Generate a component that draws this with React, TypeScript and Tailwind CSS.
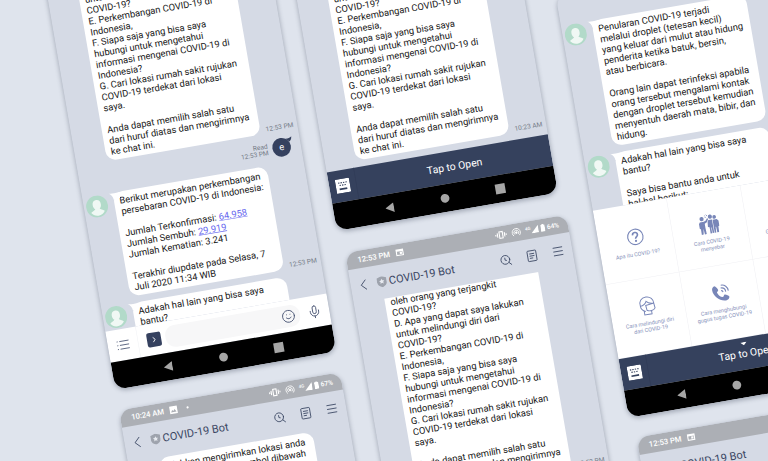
import type { ReactNode } from "react";
import { Menu, Mic, Search, Smile } from "lucide-react";

function Avatar() {
  return (
    <svg viewBox="0 0 40 40" className="ml-1 size-10 shrink-0" role="img" aria-label="Bot">
      <circle cx="20" cy="20" r="20" fill="#b2dac9" />
      <path d="M20 8c5 0 7.500 3.500 7.500 8.500 0 4-1.500 6.500-3.500 8 .5 2 6 3 8.500 5.500C30 34 25.500 37 20 37S10 34 7.500 30c2.500-2.500 8-3.500 8.500-5.500-2-1.500-3.500-4-3.500-8C12.500 11.500 15 8 20 8z" fill="#f0f8f4" />
    </svg>
  );
}

type BubbleProps = { children: ReactNode; time?: string; avatar?: boolean; shape?: string };

function Bubble({ children, time, avatar, shape = "rounded-[18px]" }: BubbleProps) {
  return (
    <div className="flex shrink-0 items-start">
      <div className="w-[56px] shrink-0">{avatar && <Avatar />}</div>
      <div className="relative w-[284px] shrink-0">
        {avatar && (
          <svg viewBox="0 0 20 14" className="absolute -left-2 top-0 h-[14px] w-5" aria-hidden="true">
            <path d="M0 0c4 2 9 2 20 1v11L8 13C8 8 5 3 0 0z" fill="#fff" />
          </svg>
        )}
        <div className={"overflow-hidden bg-white px-[10px] py-[6px] text-[17px] leading-5 text-[#161616] " + shape}>
          {children}
        </div>
      </div>
      {time && <span className="ml-[10px] self-end whitespace-nowrap text-xs text-[#747a86]">{time}</span>}
    </div>
  );
}

function Lines({ items }: { items: ReactNode[] }) {
  return (
    <>
      {items.map((item, i) => (
        <p key={i} className="min-h-5 whitespace-nowrap">{item}</p>
      ))}
    </>
  );
}

const menuLines = [
  "oleh orang yang terjangkit",
  "COVID-19?",
  "D. Apa yang dapat saya lakukan",
  "untuk melindungi diri dari",
  "COVID-19?",
  "E. Perkembangan COVID-19 di",
  "Indonesia,",
  "F. Siapa saja yang bisa saya",
  "hubungi untuk mengetahui",
  "informasi mengenai COVID-19 di",
  "Indonesia?",
  "G. Cari lokasi rumah sakit rujukan",
  "COVID-19 terdekat dari lokasi",
  "saya.",
  "",
  "Anda dapat memilih salah satu",
  "dari huruf diatas dan mengirimnya",
  "ke chat ini.",
];

function NavBar() {
  return (
    <div className="grid h-[50px] shrink-0 grid-cols-3 place-items-center bg-black px-[12.5%]">
      <button type="button" aria-label="Back">
        <svg viewBox="0 0 16 18" className="h-[18px] w-4 fill-[#a6a6a6]"><path d="M0 9 16 0v18z" /></svg>
      </button>
      <button type="button" aria-label="Home" className="size-4 rounded-full bg-[#a6a6a6]" />
      <button type="button" aria-label="Recent apps" className="size-[18px] bg-[#a6a6a6]" />
    </div>
  );
}

function StatusBar({ time, battery, photo }: { time: string; battery: string; photo?: boolean }) {
  return (
    <div className="flex h-8 shrink-0 items-center bg-[#acafb5] pl-5 pr-4 text-sm font-medium text-white">
      <span className="w-[70px] whitespace-nowrap">{time}</span>
      {photo ? (
        <>
          <svg viewBox="0 0 16 16" className="size-4" aria-hidden="true">
            <path fillRule="evenodd" d="M1 1h14v14H1zM3 12h10l-3-5-2.500 3L5.500 8z" fill="#fff" />
          </svg>
          <i className="ml-4 size-1 rounded-full bg-white" />
        </>
      ) : (
        <svg viewBox="0 0 16 16" className="size-4" aria-hidden="true">
          <path fillRule="evenodd" d="M1 2h14v12H1zM3 6v6h10V6zM8 7h4v4H8z" fill="#fff" />
        </svg>
      )}
      <div className="ml-auto flex items-center">
        <svg viewBox="0 0 22 16" className="mr-2 h-4 w-[22px]" fill="none" stroke="#fff" strokeWidth="2" aria-hidden="true">
          <path d="M8 2h6v12H8zM4.500 4v8M17.500 4v8M1.500 6.500v3M20.500 6.500v3" />
        </svg>
        <svg viewBox="0 0 18 16" className="mr-2 h-4 w-[18px]" fill="none" stroke="#fff" strokeWidth="1.500" aria-hidden="true">
          <path d="M4 14a7.500 7.500 0 1 1 10 0M6 11.500a4.300 4.300 0 1 1 6 0" /><circle cx="9" cy="8.500" r="1.500" fill="#fff" />
        </svg>
        <span className="self-start text-[8px] leading-3">4G</span>
        <svg viewBox="0 0 14 14" className="mr-1 size-[14px]" aria-hidden="true"><path d="M0 14 14 0v14z" fill="#fff" /></svg>
        <svg viewBox="0 0 8 14" className="mr-1 h-[14px] w-2" aria-hidden="true"><path d="M2.500 0h3v1.500H8V14H0V1.500h2.500z" fill="#fff" /></svg>
        <span className="text-xs">{battery}</span>
      </div>
    </div>
  );
}

function Header() {
  return (
    <header className="flex h-[62px] shrink-0 items-center pl-4 pr-[14px] text-[#3a4663]">
      <button type="button" aria-label="Back" className="mr-4">
        <svg viewBox="0 0 16 20" className="h-5 w-4" fill="none" stroke="currentColor" strokeWidth="1.500"><path d="M12 1 3 10l9 9" /></svg>
      </button>
      <svg viewBox="0 0 18 20" className="mr-1 h-5 w-[18px]" aria-hidden="true">
        <path d="M9 0 18 3v7c0 5-4 8.500-9 10-5-1.500-9-5-9-10V3z" fill="#9ea3ad" />
        <path d="m9 4.500 1.500 3 3.300.5-2.400 2.300.6 3.300L9 12l-3 1.600.6-3.300L4.200 8l3.300-.5z" fill="#e8ebf1" />
      </svg>
      <h2 className="whitespace-nowrap text-xl">COVID-19 Bot</h2>
      <div className="ml-auto flex items-center gap-6">
        <button type="button" aria-label="Search" className="relative">
          <Search className="size-6" strokeWidth={1.5} />
          <svg viewBox="0 0 24 24" className="absolute inset-0 size-6" fill="none" stroke="currentColor" strokeWidth="1.500"><path d="M10.500 7v4.500l3 1" /></svg>
        </button>
        <button type="button" aria-label="Notes">
          <svg viewBox="0 0 24 24" className="size-6" fill="none" stroke="currentColor" strokeWidth="1.500">
            <rect x="4" y="2.500" width="16" height="19" rx="1.500" /><path d="M7.500 8h9M7.500 12h9M7.500 16h6" />
          </svg>
        </button>
        <button type="button" aria-label="Menu"><Menu className="size-6" strokeWidth={1.5} /></button>
      </div>
    </header>
  );
}

function Phone({ children, edge = "" }: { children: ReactNode; edge?: string }) {
  return (
    <section className={"flex h-[780px] w-[408px] flex-col overflow-hidden rounded-[22px] bg-[#d5dae5] shadow-[0_3px_8px_1px_rgba(60,70,90,0.35)] " + edge}>
      {children}
    </section>
  );
}

function Chat({ children, pad = "" }: { children: ReactNode; pad?: string }) {
  return <div className={"flex min-h-0 flex-1 flex-col justify-end gap-3 overflow-hidden " + pad}>{children}</div>;
}

function SentReply() {
  return (
    <div className="flex shrink-0 items-center justify-end pr-[18px]">
      <p className="mr-2 text-right text-xs leading-3 text-[#747a86]">Read<br />12:53 PM</p>
      <div className="relative flex size-[34px] items-center justify-center rounded-full bg-[#35415f] text-[17px] text-white">
        <svg viewBox="0 0 12 12" className="absolute -right-1 top-0 size-3" aria-hidden="true"><path d="M0 3c5 1 8 0 12-3-1 5-3 8-5 9z" fill="#35415f" /></svg>
        e
      </div>
    </div>
  );
}

function InputBar() {
  return (
    <div className="flex h-[57px] shrink-0 items-center bg-white text-[#4a5674]">
      <button type="button" aria-label="Menu" className="flex h-full w-[56px] shrink-0 items-center justify-center border-r border-[#f1f2f5]">
        <svg viewBox="0 0 24 20" className="h-5 w-6" fill="none" stroke="currentColor" strokeWidth="1.500"><path d="M6 3h17M6 10h17M6 17h17M1 3h2M1 10h2M1 17h2" /></svg>
      </button>
      <button type="button" aria-label="Expand" className="ml-4 flex size-[26px] shrink-0 items-center justify-center rounded bg-[#35415f]">
        <svg viewBox="0 0 10 12" className="h-3 w-[10px]" fill="none" stroke="#fff" strokeWidth="1.500"><path d="m3 1.500 4 4.500-4 4.500" /></svg>
      </button>
      <div className="ml-2 flex h-10 min-w-0 flex-1 items-center rounded-[18px] bg-[#f7f7f8] pr-2">
        <input aria-label="Message" className="h-full min-w-0 flex-1 bg-transparent px-3 text-[17px] outline-none" />
        <button type="button" aria-label="Emoji"><Smile className="size-[26px]" strokeWidth={1.5} /></button>
      </div>
      <button type="button" aria-label="Voice message" className="mx-[14px] shrink-0"><Mic className="size-[26px]" strokeWidth={1.5} /></button>
    </div>
  );
}

function OpenBar({ arrow }: { arrow?: boolean }) {
  return (
    <div className="flex h-[58px] shrink-0 bg-[#35415d] text-white">
      <button type="button" aria-label="Keyboard" className="flex w-[50px] items-center justify-center border-r border-[#303b56]">
        <svg viewBox="0 0 26 26" className="size-[26px]">
          <rect width="26" height="26" rx="2" fill="#fff" />
          <path d="M5 7h2.500M9.500 7H12M14 7h2.500M18.500 7H21M7 11.500h2.500M11.500 11.500H14M16 11.500h2.500" stroke="#35415d" strokeWidth="2" fill="none" />
          <path d="M6 18.500h14" stroke="#35415d" strokeWidth="3" />
        </svg>
      </button>
      <button type="button" className="relative flex-1 pl-1 text-[19px]">
        {arrow && <svg viewBox="0 0 12 6" className="absolute left-1/2 top-2 h-[6px] w-3 -translate-x-1/2"><path d="M0 0h12L6 6z" fill="#fff" /></svg>}
        Tap to Open
      </button>
    </div>
  );
}

function PeopleIcon() {
  return (
    <svg viewBox="0 0 40 40" className="size-[38px]" fill="#7886b8" aria-hidden="true">
      <circle cx="7.500" cy="8" r="4" />
      <path d="M3 14h8l4-2 3-4 2 1.500-3.500 6L12 18v8l.5 12H9l-1-11-1.500 11H3V27l-2-1V17z" />
      <circle cx="24" cy="6" r="4" />
      <path d="M20 12h7v26h-3V27h-1v11h-3V26l-3-1 1-10z" />
      <circle cx="32" cy="8" r="3.500" />
      <path d="M28 13h8l3 3v10l-2 1-.5 11H33l-.5-11h-1L31 38h-3z" />
      <path d="M14 6h2M17 3h2M13 3h1.500M16 0h1" stroke="#7886b8" strokeWidth="1.500" />
    </svg>
  );
}

function QuestionIcon() {
  return (
    <svg viewBox="0 0 32 32" className="size-8" fill="none" stroke="#7886b8" strokeWidth="2" aria-hidden="true">
      <circle cx="16" cy="16" r="14" />
      <path d="M11.500 12.500c0-6 9-6 9 0 0 3.500-4.500 3.500-4.500 7" strokeWidth="3" /><circle cx="16" cy="23.500" r="1" />
    </svg>
  );
}

function MaskIcon() {
  return (
    <svg viewBox="0 0 36 40" className="h-9 w-8" fill="none" stroke="#7886b8" strokeWidth="2" aria-hidden="true">
      <path d="M4 19C2 9 8 2 18 2c9 0 15 7 14 15M4 19c6 0 11-4 13-8 3 4 8 6 15 6M4 19c0 6 4 10 9 12M15 19l17-2 1 10c-3 5-12 6-17 2zM10 30v8h15v-6" />
    </svg>
  );
}

function PhoneIcon() {
  return (
    <svg viewBox="0 0 36 36" className="size-9" aria-hidden="true">
      <path d="M8 4c3 1 5 5 6 8 0 2-3 3-3 4 1 5 5 9 9 10 2 0 2-3 4-4 3 0 7 3 8 5 0 3-3 6-7 6C14 33 3 22 3 11c0-4 2-6 5-7z" fill="#7886b8" />
      <path d="M19 9c5 0 8 3 8 8M20 4c7 0 12 5 12 12M19 14c2 0 3 1 3 3" fill="none" stroke="#7886b8" strokeWidth="2" />
    </svg>
  );
}

function Tile({ icon, label, row }: { icon: ReactNode; label: ReactNode; row: string }) {
  return (
    <button type="button" className={"flex h-[137px] flex-col items-center border-b border-r border-[#efeff3] text-[10px] leading-3 text-[#8993bb] " + row}>
      <span className="mb-[6px] flex h-10 items-center">{icon}</span>
      <span className="whitespace-nowrap">{label}</span>
    </button>
  );
}

function TilePanel() {
  return (
    <div className="grid shrink-0 grid-cols-3 bg-white">
      <Tile row="pt-10" icon={<QuestionIcon />} label="Apa itu COVID-19?" />
      <Tile row="pt-10" icon={<PeopleIcon />} label={<>Cara COVID-19<br />menyebar</>} />
      <Tile row="pt-10" icon={<PeopleIcon />} label="Gejala COVID-19" />
      <Tile row="pt-[30px]" icon={<MaskIcon />} label={<>Cara melindungi diri<br />dari COVID-19</>} />
      <Tile row="pt-[30px]" icon={<PhoneIcon />} label={<>Cara menghubungi<br />gugus tugas COVID-19</>} />
      <Tile row="pt-[30px]" icon={<PhoneIcon />} label="Lokasi" />
    </div>
  );
}

export default function App() {
  return (
    <main className="relative h-screen overflow-hidden bg-[#dfe4ed] font-[Roboto,sans-serif]">
      <div className="absolute left-0 top-0 origin-top-left rotate-[-9.8deg] scale-55">
        <div className="absolute left-[86px] top-[-46px] flex flex-col gap-[38px]">
          <Phone>
            <Chat>
              <Bubble time="12:53 PM"><Lines items={menuLines} /></Bubble>
              <SentReply />
              <Bubble avatar time="12:53 PM">
                <Lines
                  items={[
                    "Berikut merupakan perkembangan",
                    "persebaran COVID-19 di Indonesia:",
                    "",
                    <>Jumlah Terkonfirmasi: <a href="#confirmed" className="text-[#6464ee] underline">64.958</a></>,
                    <>Jumlah Sembuh: <a href="#recovered" className="text-[#6464ee] underline">29.919</a></>,
                    "Jumlah Kematian: 3.241",
                    "",
                    "Terakhir diupdate pada Selasa, 7",
                    "Juli 2020 11:34 WIB",
                  ]}
                />
              </Bubble>
              <Bubble avatar shape="h-[43px] rounded-t-[18px]"><Lines items={["Adakah hal lain yang bisa saya", "bantu?"]} /></Bubble>
            </Chat>
            <InputBar />
            <NavBar />
          </Phone>
          <Phone>
            <StatusBar time="10:24 AM" battery="67%" photo />
            <Header />
            <div className="pt-1">
              <Bubble><Lines items={["Silahkan mengirimkan lokasi anda", "dengan menekan tombol dibawah", "ini."]} /></Bubble>
            </div>
          </Phone>
        </div>

        <div className="absolute left-[532px] top-[-262px] flex flex-col gap-[42px]">
          <Phone>
            <Chat pad="pb-3">
              <Bubble time="10:23 AM"><Lines items={menuLines} /></Bubble>
            </Chat>
            <OpenBar />
            <NavBar />
          </Phone>
          <Phone edge="ml-2">
            <StatusBar time="12:53 PM" battery="64%" />
            <Header />
            <div className="overflow-hidden">
              <div className="-mt-2">
                <Bubble time="12:53 PM" shape="rounded-b-[18px]"><Lines items={menuLines} /></Bubble>
              </div>
            </div>
          </Phone>
        </div>

        <div className="absolute left-[997px] top-[163px] flex flex-col gap-[38px]">
          <Phone>
            <Chat>
              <Bubble avatar>
                <Lines
                  items={[
                    "Penularan COVID-19 terjadi",
                    "melalui droplet (tetesan kecil)",
                    "yang keluar dari mulut atau hidung",
                    "penderita ketika batuk, bersin,",
                    "atau berbicara.",
                    "",
                    "Orang lain dapat terinfeksi apabila",
                    "orang tersebut mengalami kontak",
                    "dengan droplet tersebut kemudian",
                    "menyentuh daerah mata, bibir, dan",
                    "hidung.",
                  ]}
                />
              </Bubble>
              <Bubble avatar shape="h-[97px] rounded-t-[18px]">
                <Lines items={["Adakah hal lain yang bisa saya", "bantu?", "", "Saya bisa bantu anda untuk", "hal-hal berikut:"]} />
              </Bubble>
            </Chat>
            <TilePanel />
            <OpenBar arrow />
            <NavBar />
          </Phone>
          <Phone edge="ml-2">
            <StatusBar time="12:53 PM" battery="64%" />
            <Header />
          </Phone>
        </div>
      </div>
    </main>
  );
}
